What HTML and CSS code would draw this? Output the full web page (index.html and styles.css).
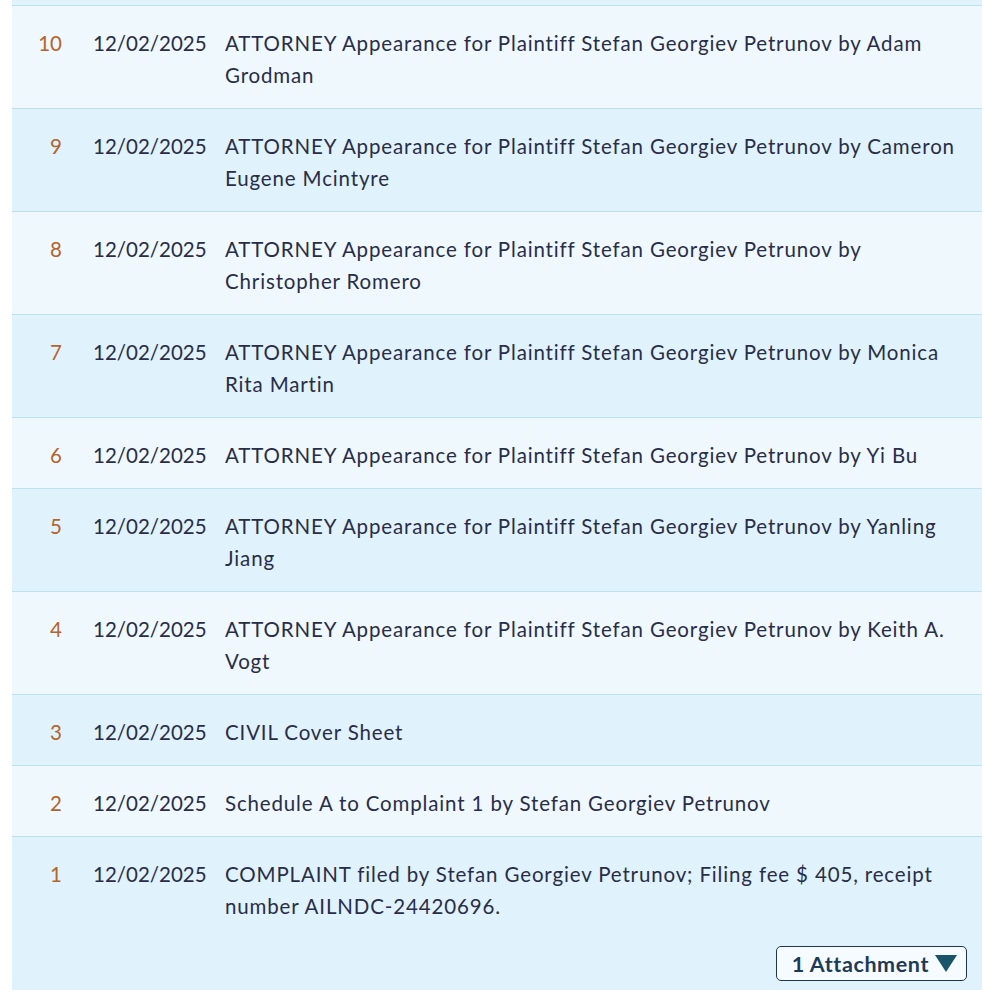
FILE: index.html
```html
<!DOCTYPE html>
<html lang="en">
<head>
<meta charset="utf-8">
<link rel="stylesheet" href="styles.css">
</head>
<body>
<div class="docket">
  <div class="row odd cut"></div>
  <div class="row even"><div class="num">10</div><div class="date">12/02/2025</div><div class="desc">ATTORNEY Appearance for Plaintiff Stefan Georgiev Petrunov by Adam Grodman</div></div>
  <div class="row odd"><div class="num">9</div><div class="date">12/02/2025</div><div class="desc">ATTORNEY Appearance for Plaintiff Stefan Georgiev Petrunov by Cameron Eugene Mcintyre</div></div>
  <div class="row even"><div class="num">8</div><div class="date">12/02/2025</div><div class="desc">ATTORNEY Appearance for Plaintiff Stefan Georgiev Petrunov by Christopher Romero</div></div>
  <div class="row odd"><div class="num">7</div><div class="date">12/02/2025</div><div class="desc">ATTORNEY Appearance for Plaintiff Stefan Georgiev Petrunov by Monica Rita Martin</div></div>
  <div class="row even"><div class="num">6</div><div class="date">12/02/2025</div><div class="desc">ATTORNEY Appearance for Plaintiff Stefan Georgiev Petrunov by Yi Bu</div></div>
  <div class="row odd"><div class="num">5</div><div class="date">12/02/2025</div><div class="desc">ATTORNEY Appearance for Plaintiff Stefan Georgiev Petrunov by Yanling Jiang</div></div>
  <div class="row even"><div class="num">4</div><div class="date">12/02/2025</div><div class="desc">ATTORNEY Appearance for Plaintiff Stefan Georgiev Petrunov by Keith A. Vogt</div></div>
  <div class="row odd"><div class="num">3</div><div class="date">12/02/2025</div><div class="desc">CIVIL Cover Sheet</div></div>
  <div class="row even"><div class="num">2</div><div class="date">12/02/2025</div><div class="desc">Schedule A to Complaint 1 by Stefan Georgiev Petrunov</div></div>
  <div class="row odd last"><div class="num">1</div><div class="date">12/02/2025</div><div class="desc">COMPLAINT filed by Stefan Georgiev Petrunov; Filing fee $ 405, receipt number AILNDC-24420696.</div>
    <div class="attach-wrap"><button class="attach">1 Attachment <svg class="tri" width="22" height="17" viewBox="0 0 22 17"><path d="M0 0 H22 L11 17 Z" fill="#1a5468"/></svg></button></div>
  </div>
</div>
</body>
</html>
```

FILE: styles.css
```css
html, body {
  margin: 0;
  padding: 0;
  background: #ffffff;
}
body {
  padding: 0 0 0 12px;
  font-family: "Lato", "Open Sans", sans-serif;
  font-size: 20.5px;
  line-height: 32px;
  color: #2a2d48;
}
.docket {
  width: 970px;
}
.row {
  display: grid;
  grid-template-columns: 50px 163px 1fr;
  padding: 21px 18px 17px 0;
  border-bottom: 1px solid #bde2ef;
}
.row.cut {
  padding: 0;
  height: 5px;
}
.even { background: #eef8fd; }
.odd { background: #e0f2fb; }
.num {
  text-align: right;
  color: #b5632b;
}
.date {
  padding-left: 31px;
}
.desc {
  letter-spacing: 0.85px;
}
.last {
  padding-bottom: 9px;
  border-bottom: none;
}
.attach-wrap {
  grid-column: 1 / -1;
  display: flex;
  justify-content: flex-end;
  margin-top: 24px;
  margin-right: -3px;
}
.attach {
  display: flex;
  align-items: center;
  gap: 6px;
  font-family: "Lato", "Open Sans", sans-serif;
  font-size: 21.5px;
  font-weight: 700;
  letter-spacing: 0.6px;
  color: #1d3a57;
  background: #f5fbfe;
  border: 1.5px solid #1f3550;
  border-radius: 5px;
  padding: 0 9px 0 15px;
  height: 35px;
}
.tri {
  display: block;
}
```
